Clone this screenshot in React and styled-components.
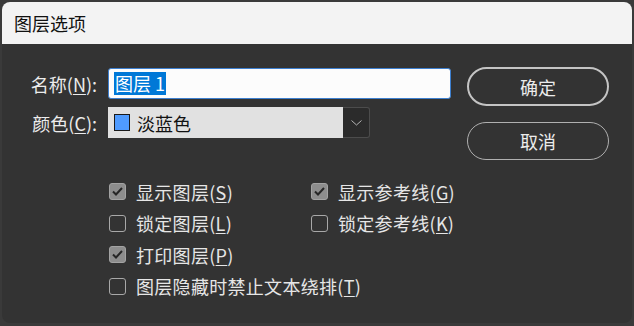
import styled, { createGlobalStyle } from "styled-components";

const GlobalStyle = createGlobalStyle`
  html, body {
    margin: 0;
    padding: 0;
    background: #3a3a3a;
  }
  body {
    font-family: "Noto Sans CJK SC", "Noto Sans", sans-serif;
  }
`;

const Dialog = styled.div`
  width: 630px;
  height: 321px;
  margin: 2px 0 0 2px;
  border-radius: 8px;
  overflow: hidden;
  background: #333333;
  display: flex;
  flex-direction: column;
`;

const TitleBar = styled.div`
  height: 42px;
  background: #f3f3f3;
  display: flex;
  align-items: center;
  padding-left: 12px;
  font-size: 18px;
  color: #111;
`;

const Body = styled.div`
  display: flex;
  align-items: flex-start;
  padding-top: 24px;
`;

const Left = styled.div`
  width: 449px;
  flex: none;
  display: flex;
  flex-direction: column;
`;

const FormGrid = styled.div`
  display: grid;
  grid-template-columns: 95px auto;
  column-gap: 11px;
  row-gap: 8px;
  align-items: center;
`;

const Label = styled.label`
  text-align: right;
  font-size: 18px;
  color: #ececec;
  white-space: nowrap;
`;

const Key = styled.u`
  text-decoration: underline;
  text-underline-offset: 2px;
`;

const TextInput = styled.div`
  width: 343px;
  height: 31px;
  box-sizing: border-box;
  background: #fcfcfc;
  border: 1px solid #3d7fcf;
  border-radius: 3px;
  display: flex;
  align-items: center;
  padding-left: 5px;
`;

const Selected = styled.span`
  background: #0078d7;
  color: #fff;
  font-size: 18px;
  line-height: 23px;
  padding: 0 1px;
`;

const Select = styled.div`
  width: 262px;
  height: 31px;
  box-sizing: border-box;
  display: flex;
`;

const SelectValue = styled.div`
  flex: 1;
  background: #e1e1e1;
  display: flex;
  align-items: center;
  gap: 7px;
  padding-left: 6px;
  font-size: 18px;
  color: #111;
`;

const Swatch = styled.span`
  width: 16px;
  height: 17px;
  box-sizing: border-box;
  background: ${(p) => p.color};
  border: 1px solid #1a1a1a;
`;

const SelectButton = styled.div`
  width: 27px;
  box-sizing: border-box;
  background: #2b2b2b;
  border: 1px solid #4c4c4c;
  border-left: none;
  border-radius: 0 3px 3px 0;
  display: flex;
  align-items: center;
  justify-content: center;
`;

const CheckGrid = styled.div`
  display: grid;
  grid-template-columns: 202px auto;
  grid-auto-rows: 31.5px;
  margin: 38px 0 0 107px;
`;

const CheckRow = styled.div`
  display: flex;
  align-items: center;
  gap: 10px;
  grid-column: ${(p) => (p.wide ? "1 / span 2" : "auto")};
  font-size: 18px;
  letter-spacing: 0.3px;
  color: #e6e6e6;
  white-space: nowrap;
`;

const Box = styled.span`
  width: 17px;
  height: 17px;
  box-sizing: border-box;
  border-radius: 3px;
  border: 1px solid ${(p) => (p.checked ? "#a3a3a3" : "#a8a8a8")};
  background: ${(p) => (p.checked ? "#8d8d8d" : "transparent")};
  display: flex;
  align-items: center;
  justify-content: center;
`;

const Buttons = styled.div`
  display: flex;
  flex-direction: column;
  gap: 16px;
  margin: -1px 0 0 16px;
`;

const Button = styled.div`
  width: 142px;
  height: ${(p) => (p.primary ? "39px" : "38px")};
  box-sizing: border-box;
  border-radius: 20px;
  border: ${(p) => (p.primary ? "2px solid #c4c4c4" : "1px solid #b0b0b0")};
  display: flex;
  align-items: center;
  justify-content: center;
  font-size: 18px;
  color: #ececec;
`;

const Check = () => (
  <svg width="11" height="9" viewBox="0 0 11 9">
    <polyline
      points="1,4.5 4,7.5 10,1"
      fill="none"
      stroke="#262626"
      strokeWidth="2"
    />
  </svg>
);

const Chevron = () => (
  <svg width="11" height="6" viewBox="0 0 11 6">
    <polyline points="0.5,0.5 5.5,5 10.5,0.5" fill="none" stroke="#b5b5b5" strokeWidth="1" />
  </svg>
);

const Option = ({ checked, wide, text, k }) => (
  <CheckRow wide={wide}>
    <Box checked={checked}>{checked && <Check />}</Box>
    <span>
      {text}(<Key>{k}</Key>)
    </span>
  </CheckRow>
);

export default function App() {
  return (
    <>
      <GlobalStyle />
      <Dialog>
        <TitleBar>图层选项</TitleBar>
        <Body>
          <Left>
            <FormGrid>
              <Label>
                名称(<Key>N</Key>):
              </Label>
              <TextInput>
                <Selected>图层 1</Selected>
              </TextInput>
              <Label>
                颜色(<Key>C</Key>):
              </Label>
              <Select>
                <SelectValue>
                  <Swatch color="#4f9bff" />
                  淡蓝色
                </SelectValue>
                <SelectButton>
                  <Chevron />
                </SelectButton>
              </Select>
            </FormGrid>
            <CheckGrid>
              <Option checked text="显示图层" k="S" />
              <Option checked text="显示参考线" k="G" />
              <Option text="锁定图层" k="L" />
              <Option text="锁定参考线" k="K" />
              <Option checked wide text="打印图层" k="P" />
              <Option wide text="图层隐藏时禁止文本绕排" k="T" />
            </CheckGrid>
          </Left>
          <Buttons>
            <Button primary>确定</Button>
            <Button>取消</Button>
          </Buttons>
        </Body>
      </Dialog>
    </>
  );
}
